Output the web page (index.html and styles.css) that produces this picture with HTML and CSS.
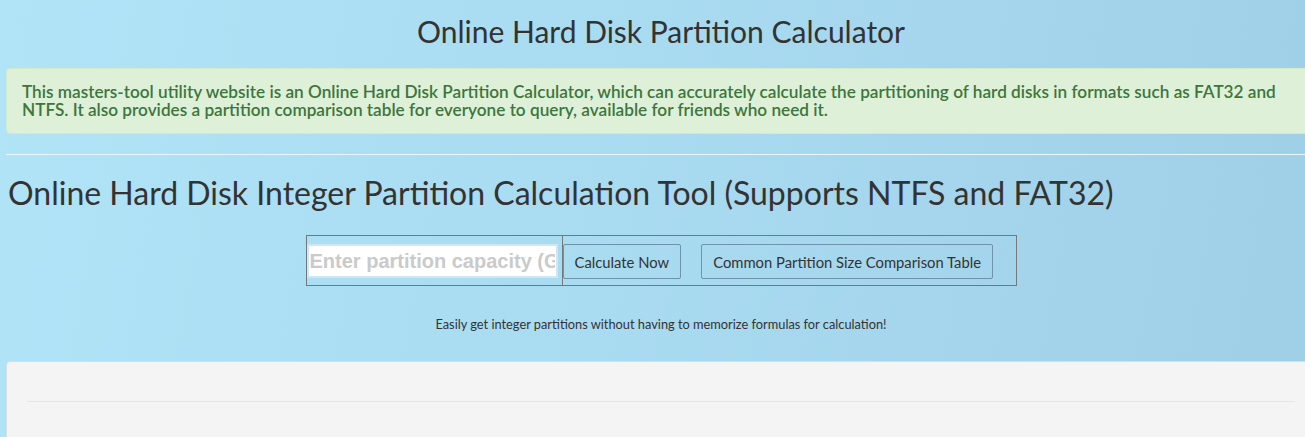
FILE: index.html
```html
<!DOCTYPE html>
<html lang="en">
<head>
<meta charset="utf-8">
<title>Online Hard Disk Partition Calculator</title>
<link rel="stylesheet" href="styles.css">
</head>
<body>
<div class="page">
  <h1 class="title">Online Hard Disk Partition Calculator</h1>
  <div class="alert">This masters-tool utility website is an Online Hard Disk Partition Calculator, which can accurately calculate the partitioning of hard disks in formats such as FAT32 and NTFS. It also provides a partition comparison table for everyone to query, available for friends who need it.</div>
  <hr class="rule">
  <h2 class="tool-title">Online Hard Disk Integer Partition Calculation Tool (Supports NTFS and FAT32)</h2>
  <div class="calc">
    <div class="calc-cell calc-input">
      <input type="text" class="capacity" placeholder="Enter partition capacity (GB)">
    </div>
    <div class="calc-cell calc-actions">
      <button class="btn">Calculate Now</button>
      <button class="btn">Common Partition Size Comparison Table</button>
    </div>
  </div>
  <p class="caption">Easily get integer partitions without having to memorize formulas for calculation!</p>
  <div class="panel">
    <hr class="panel-rule">
  </div>
</div>
</body>
</html>
```
FILE: styles.css
```css
html {
  overflow: hidden;
}
body {
  margin: 0;
  min-height: 437px;
  background: linear-gradient(100deg, #b1e4f7 0%, #a9dbf1 45%, #9fcfe7 100%);
  font-family: Lato, "Noto Sans", sans-serif;
  color: #333;
}
.page {
  width: 1310px;
  padding: 13px 0 0 6px;
}
.title {
  margin: 0;
  text-align: center;
  font-size: 30px;
  line-height: 36px;
  font-weight: 400;
  color: #333;
}
.alert {
  margin-top: 19px;
  background: #dff0d8;
  border: 1px solid #d6e9c6;
  border-radius: 4px;
  color: #3c763d;
  padding: 14px 15px;
  font-size: 17.2px;
  line-height: 18px;
  font-weight: 600;
}
.rule {
  margin: 20px 0 0;
  border: 0;
  border-top: 1px solid #eaf6fb;
  height: 0;
}
.tool-title {
  margin: 18px 0 0 2px;
  font-size: 32px;
  line-height: 40px;
  font-weight: 400;
  color: #333;
}
.calc {
  margin: 22px auto 0;
  width: 709px;
  display: flex;
  border: 1px solid #777;
}
.calc-cell {
  display: flex;
  align-items: flex-start;
}
.calc-input {
  width: 256px;
  padding: 8px 4px 7px 0;
  box-sizing: border-box;
  border-right: 1px solid #777;
}
.capacity {
  width: 251px;
  height: 34px;
  box-sizing: border-box;
  border: 2px solid #cfe7f5;
  padding: 0 1px;
  background: #fff;
  font-family: "Liberation Sans", Arial, sans-serif;
  font-weight: 700;
  font-size: 20px;
  outline: none;
}
.capacity::placeholder {
  color: #cacaca;
}
.calc-actions {
  padding-top: 8px;
  gap: 20px;
}
.btn {
  height: 35px;
  padding: 0 11px;
  background: transparent;
  border: 1px solid #6e93ab;
  border-radius: 2px;
  font-family: Lato, "Noto Sans", sans-serif;
  font-size: 14.8px;
  color: #333;
}
.caption {
  margin: 30px 0 0;
  text-align: center;
  font-size: 12.8px;
  line-height: 17px;
}
.panel {
  margin-top: 28px;
  min-height: 120px;
  background: #f4f4f4;
  border: 1px solid #dcdcdc;
  border-radius: 4px;
  padding: 39px 20px 0;
}
.panel-rule {
  margin: 0;
  border: 0;
  border-top: 1px solid #e6e6e6;
  height: 0;
}
```
